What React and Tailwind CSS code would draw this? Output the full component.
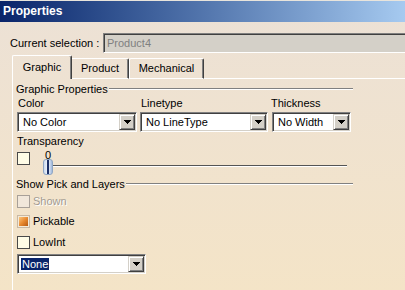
import React from "react";

// ── Win classic bevels ─────────────────────────────────────────────────────
const sunken =
  "border border-t-[#808080] border-l-[#808080] border-b-white border-r-white shadow-[inset_1px_1px_0_#404040,inset_-1px_-1px_0_#d4d0c8]";
const raised =
  "border border-t-[#d4d0c8] border-l-[#d4d0c8] border-b-[#404040] border-r-[#404040] bg-[#d4d0c8] shadow-[inset_1px_1px_0_#ffffff,inset_-1px_-1px_0_#808080]";

const Arrow = () => (
  <svg width="7" height="4" viewBox="0 0 7 4" shapeRendering="crispEdges">
    <path d="M0 0h7v1h-1v1h-1v1h-1v1h-1v-1h-1v-1h-1v-1h-1z" fill="#000" />
  </svg>
);

const Combo = ({ value, width, highlight }) => (
  <div className={`h-[20px] ${width} flex items-center bg-white p-px ${sunken}`}>
    <div className="flex-1 pl-[2px] text-black whitespace-nowrap">
      {highlight ? (
        <span className="bg-[#0a246a] text-white px-px">{value}</span>
      ) : (
        <span className="pl-[2px]">{value}</span>
      )}
    </div>
    <div className={`w-[16px] h-[16px] shrink-0 flex items-center justify-center ${raised}`}>
      <Arrow />
    </div>
  </div>
);

const GroupHeader = ({ title }) => (
  <div className="flex items-center h-[14px] w-[336px]">
    <span className="text-black -ml-px pr-px whitespace-nowrap">{title}</span>
    <div className="flex-1 h-[2px] border-t border-t-[#808080] border-b border-b-white" />
  </div>
);

const Check = ({ kind = "normal" }) => {
  if (kind === "disabled")
    return <div className="w-[13px] h-[13px] border border-[#a8a098] bg-[#f1e7da]" />;
  if (kind === "checked")
    return (
      <div className="w-[13px] h-[13px] border border-[#c8b8a4] bg-[#f4ead8] p-px">
        <div className="w-full h-full bg-gradient-to-br from-[#fbc77a] via-[#e88a30] to-[#b85a10]" />
      </div>
    );
  return <div className="w-[13px] h-[13px] border border-[#4a4a4a] bg-[#fffce6]" />;
};

const CheckRow = ({ label, kind, className }) => (
  <div className={`flex items-center h-[13px] ${className}`}>
    <Check kind={kind} />
    <span
      className={`ml-[3px] ${
        kind === "disabled" ? "text-[#a39b92] [text-shadow:1px_1px_0_#fff]" : "text-black"
      }`}
    >
      {label}
    </span>
  </div>
);

// ── Main ───────────────────────────────────────────────────────────────────
export default function App() {
  return (
    <div className="w-[405px] h-[290px] overflow-hidden flex flex-col bg-gradient-to-b from-[#ece1d6] to-[#f4e4c7] font-['Liberation_Sans',Arial,sans-serif] text-[11px] leading-[13px]">
      {/* Title bar */}
      <div className="border-t border-t-[#e8e4dc] h-[23px]">
        <div className="h-[21px] flex items-center pl-[3px] bg-gradient-to-r from-[#0a246a] to-[#a6caf0]">
          <span className="text-white font-bold text-[12px]">Properties</span>
        </div>
      </div>

      {/* Current selection */}
      <div className="flex items-center mt-[10px] h-[20px]">
        <span className="w-[93px] shrink-0 ml-[10px] text-black whitespace-nowrap">Current selection :</span>
        <div className={`flex-1 -mr-[4px] h-[20px] flex items-center bg-[#d4d0c8] pl-[3px] ${sunken}`}>
          <span className="text-[#808080]">Product4</span>
        </div>
      </div>

      {/* Tabs */}
      <div className="flex items-end h-[24px] mt-[2px] pl-[12px]">
        <div className="w-[60px] h-[24px] flex items-center justify-center border-t border-l border-r border-t-white border-l-white border-r-[#404040] rounded-t-[2px] shadow-[inset_-1px_0_0_#808080] text-black">
          Graphic
        </div>
        <div className="w-[57px] h-[21px] flex items-center justify-center border-t border-r border-b border-t-white border-r-[#404040] border-b-white rounded-tr-[2px] shadow-[inset_-1px_0_0_#808080] text-black">
          Product
        </div>
        <div className="w-[75px] h-[21px] flex items-center justify-center border border-t-white border-l-white border-b-white border-r-[#404040] rounded-t-[2px] shadow-[inset_-1px_0_0_#808080] text-black">
          Mechanical
        </div>
        <div className="flex-1 h-[21px] border-b border-b-white" />
      </div>

      {/* Panel */}
      <div className="flex-1 ml-[12px] border-l border-l-white pl-[4px] flex flex-col">
        <div className="mt-[3px]">
          <GroupHeader title="Graphic Properties" />
        </div>

        <div className="flex mt-px">
          <div className="flex flex-col">
            <span className="h-[13px] pl-px text-black">Color</span>
            <div className="mt-[2px]">
              <Combo value="No Color" width="w-[120px]" />
            </div>
          </div>
          <div className="flex flex-col ml-[3px]">
            <span className="h-[13px] pl-px text-black">Linetype</span>
            <div className="mt-[2px]">
              <Combo value="No LineType" width="w-[128px]" />
            </div>
          </div>
          <div className="flex flex-col ml-[4px]">
            <span className="h-[13px] -ml-px text-black">Thickness</span>
            <div className="mt-[2px]">
              <Combo value="No Width" width="w-[79px]" />
            </div>
          </div>
        </div>

        <span className="mt-[3px] h-[13px] text-black">Transparency</span>

        {/* Transparency slider */}
        <div className="flex items-start mt-[3px] h-[24px]">
          <div className="mt-[1px]">
            <Check />
          </div>
          <div className="relative ml-[13px] w-[304px] h-[24px]">
            <span className="absolute left-[2px] -top-[2px] text-black">0</span>
            <div className="absolute left-[6px] right-0 top-[14px] h-[2px] border-t border-t-[#555] border-b border-b-white" />
            <div className="absolute left-0 top-[8px] w-[10px] h-[16px] rounded-[3px] border border-[#8fa6c4] bg-gradient-to-r from-[#c9d8ee] via-[#f6f9fd] to-[#9fb7db] flex justify-center">
              <div className="w-[2px] h-full bg-[#1b2f66]" />
            </div>
          </div>
        </div>

        <div className="mt-[2px]">
          <GroupHeader title="Show Pick and Layers" />
        </div>

        <CheckRow label="Shown" kind="disabled" className="mt-[4px]" />
        <CheckRow label="Pickable" kind="checked" className="mt-[7px]" />
        <CheckRow label="LowInt" className="mt-[8px]" />

        <div className="mt-[5px]">
          <Combo value="None" width="w-[129px]" highlight />
        </div>
      </div>
    </div>
  );
}
